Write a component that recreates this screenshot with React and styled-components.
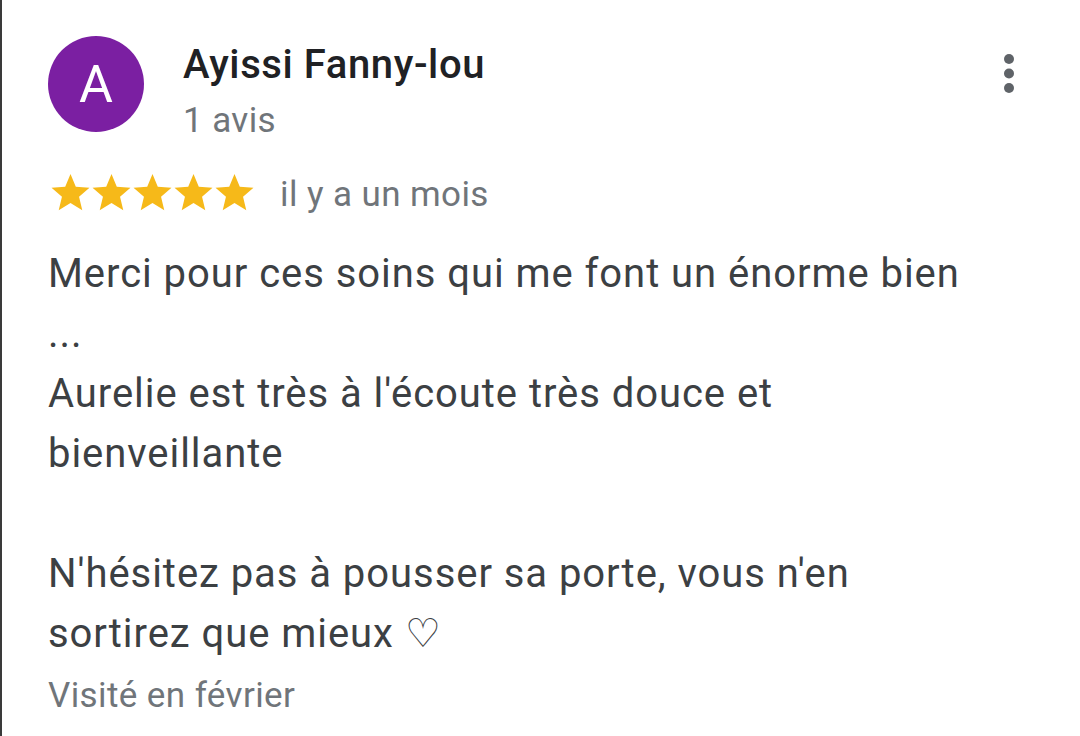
import * as React from 'react';
import styled, { createGlobalStyle } from 'styled-components'

const GlobalStyle = createGlobalStyle`
  html, body {
    margin: 0;
    padding: 0;
    background: #ffffff;
  }
  body {
    font-family: Roboto, "Liberation Sans", Arial, sans-serif;
  }
`

const Card = styled.div`
  box-sizing: border-box;
  height: 736px;
  width: 1080px;
  border-left: 2px solid #3a3a3a;
  padding: 36px 47px 0 46px;
  background: #fff;
  overflow: hidden;
`
const Header = styled.div`
  display: flex;
  align-items: flex-start;
`
const Avatar = styled.div`
  flex: 0 0 96px;
  width: 96px;
  height: 96px;
  border-radius: 50%;
  background: ${props => props.color};
  color: #fff;
  display: flex;
  align-items: center;
  justify-content: center;
  font-size: 52px;
  font-weight: 400;
`
const Author = styled.div`
  display: flex;
  flex-direction: column;
  margin-left: 39px;
  padding-top: 6px;
`
const Name = styled.div`
  font-size: 40px;
  line-height: 46px;
  font-weight: 500;
  letter-spacing: 0.6px;
  color: #202124;
`
const Meta = styled.div`
  font-size: 35px;
  line-height: 40px;
  letter-spacing: 0.4px;
  color: #70757a;
  margin-top: ${props => props.top || 0}px;
`
const MenuButton = styled.button`
  margin-left: auto;
  margin-top: 14px;
  width: 48px;
  height: 48px;
  border: none;
  background: none;
  padding: 0;
  display: flex;
  align-items: center;
  justify-content: center;
`
const RatingRow = styled.div`
  display: flex;
  align-items: center;
  height: 40px;
  margin-top: 31px;
  padding-left: 2px;
`
const Stars = styled.div`
  display: flex;
  margin-right: 25px;
`
const Body = styled.div`
  margin-top: 32px;
  font-size: 40px;
  line-height: 60px;
  letter-spacing: 0.95px;
  color: #3c4043;
  white-space: pre-line;
`
const Visited = styled(Meta)`
  line-height: 60px;
  margin-top: 2px;
`

function Star() {
  return (
    <svg width="41" height="41" viewBox="0 0 24 24">
      <path fill="#f6b919" d="M12 1.2l3.1 7.4 8 .6-6.1 5.3 1.9 7.9L12 18.2l-6.9 4.2L7 14.5.9 9.2l8-.6z"/>
    </svg>
  )
}

function Dots() {
  return (
    <svg width="12" height="42" viewBox="0 0 12 42">
      <circle cx="6" cy="6" r="5" fill="#5f6368"/>
      <circle cx="6" cy="20.5" r="5" fill="#5f6368"/>
      <circle cx="6" cy="35" r="5" fill="#5f6368"/>
    </svg>
  )
}

const review = {
  initial: 'A',
  color: '#7b1fa2',
  name: 'Ayissi Fanny-lou',
  count: '1 avis',
  rating: 5,
  when: 'il y a un mois',
  text: "Merci pour ces soins qui me font un énorme bien\n...\nAurelie est très à l'écoute très douce et\nbienveillante\n\nN'hésitez pas à pousser sa porte, vous n'en\nsortirez que mieux ♡",
  visited: 'Visité en février',
}

export default function App() {
  return (
    <Card>
      <GlobalStyle />
      <Header>
        <Avatar color={review.color}>{review.initial}</Avatar>
        <Author>
          <Name>{review.name}</Name>
          <Meta top={13}>{review.count}</Meta>
        </Author>
        <MenuButton aria-label="Plus d'options"><Dots /></MenuButton>
      </Header>
      <RatingRow>
        <Stars>
          {Array.from({ length: review.rating }).map((_, i) => <Star key={i} />)}
        </Stars>
        <Meta top={6}>{review.when}</Meta>
      </RatingRow>
      <Body>{review.text}</Body>
      <Visited>{review.visited}</Visited>
    </Card>
  )
}
